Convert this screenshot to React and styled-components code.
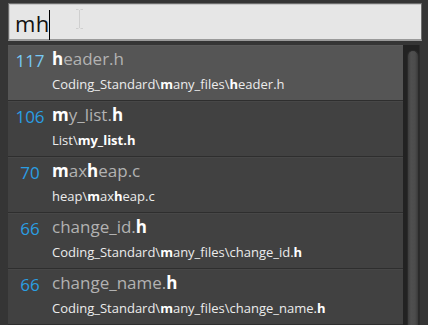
import React from "react";
import styled, { createGlobalStyle } from "styled-components";

const Global = createGlobalStyle`
  html, body { margin: 0; padding: 0; background: #353535; }
  body { font-family: "Open Sans", "Noto Sans", sans-serif; overflow: hidden; }
`;

const Frame = styled.div`
  width: 428px;
  height: 325px;
  box-sizing: border-box;
  padding: 3px 6px 0 8px;
  display: flex;
  flex-direction: column;
  gap: 4px;
  overflow: hidden;
`;

const SearchBox = styled.div`
  height: 38px;
  box-sizing: border-box;
  background: #e6e6e6;
  border: 1px solid #6c6c6c;
  border-bottom: 2px solid #9a9a9a;
  box-shadow: inset 1px 1px 0 #c8c8c8;
  display: flex;
  align-items: center;
  padding-left: 6px;
  position: relative;
  flex: none;
`;

const Query = styled.span`
  font-size: 22px;
  color: #111;
  line-height: 1;
  letter-spacing: 0.3px;
  margin-top: 2px;
`;

const Caret = styled.span`
  display: inline-block;
  width: 1px;
  height: 30px;
  background: #000;
  margin-left: 0;
  margin-top: 6px;
`;

const IBeam = styled.svg`
  position: absolute;
  left: 66px;
  top: 4px;
`;

const Panel = styled.div`
  flex: 1;
  display: flex;
  width: 412px;
  min-height: 0;
`;

const List = styled.div`
  flex: 1;
  display: flex;
  flex-direction: column;
  background: #414141;
`;

const Row = styled.div`
  height: 55px;
  flex: none;
  display: flex;
  background: ${(p) => (p.$selected ? "#555555" : "#414141")};
  border-bottom: 1px solid #2e2e2e;
  box-shadow: inset 0 1px 0 ${(p) => (p.$selected ? "#5a5a5a" : "#474747")};
`;

const Score = styled.div`
  width: 44px;
  flex: none;
  text-align: center;
  font-size: 17px;
  line-height: 1;
  padding-top: 7px;
  color: ${(p) => (p.$selected ? "#78c8f2" : "#2a9ee3")};
`;

const Texts = styled.div`
  display: flex;
  flex-direction: column;
`;

const Title = styled.div`
  font-size: 17px;
  line-height: 1;
  padding-top: 5px;
  color: #b2b2b2;
  white-space: nowrap;
  b { color: #ffffff; font-weight: 700; }
`;

const Path = styled.div`
  font-size: 13px;
  line-height: 1;
  padding-top: 11px;
  color: #ececec;
  white-space: nowrap;
  b { color: #ffffff; font-weight: 700; }
`;

const Track = styled.div`
  width: 17px;
  flex: none;
  background: #222222;
  border-right: 1px solid #2b2b2b;
  display: flex;
  justify-content: center;
  padding-top: 5px;
  box-sizing: border-box;
`;

const Thumb = styled.div`
  width: 12px;
  height: 100%;
  margin-left: 3px;
  border-radius: 6px 6px 0 0;
  background: linear-gradient(to right, #3e3e3e, #4f4f4f 30%, #4c4c4c 70%, #3a3a3a);
  border: 1px solid #2a2a2a;
  border-bottom: none;
  box-sizing: border-box;
`;

function Hl({ parts }) {
  return parts.map((p, i) =>
    i % 2 === 1 ? <b key={i}>{p}</b> : <React.Fragment key={i}>{p}</React.Fragment>
  );
}

const items = [
  { score: 117, title: ["", "h", "eader.h"], path: ["Coding_Standard\\", "m", "any_files\\", "h", "eader.h"] },
  { score: 106, title: ["", "m", "y_list.", "h", ""], path: ["List\\", "my_list.h", ""] },
  { score: 70, title: ["", "m", "ax", "h", "eap.c"], path: ["heap\\", "m", "ax", "h", "eap.c"] },
  { score: 66, title: ["change_id.", "h", ""], path: ["Coding_Standard\\", "m", "any_files\\change_id.", "h", ""] },
  { score: 66, title: ["change_name.", "h", ""], path: ["Coding_Standard\\", "m", "any_files\\change_name.", "h", ""] },
];

export default function App() {
  return (
    <>
      <Global />
      <Frame>
        <SearchBox>
          <Query>mh</Query>
          <Caret />
          <IBeam width="9" height="22" viewBox="0 0 9 22">
            <path d="M1 1.5h2.5M5.5 1.5H8M4.5 2v18M1 20.5h2.5M5.5 20.5H8" stroke="#cfcfcf" strokeWidth="1" fill="none" />
          </IBeam>
        </SearchBox>
        <Panel>
          <List>
            {items.map((it, i) => (
              <Row key={i} $selected={i === 0}>
                <Score $selected={i === 0}>{it.score}</Score>
                <Texts>
                  <Title><Hl parts={it.title} /></Title>
                  <Path><Hl parts={it.path} /></Path>
                </Texts>
              </Row>
            ))}
          </List>
          <Track>
            <Thumb />
          </Track>
        </Panel>
      </Frame>
    </>
  );
}
